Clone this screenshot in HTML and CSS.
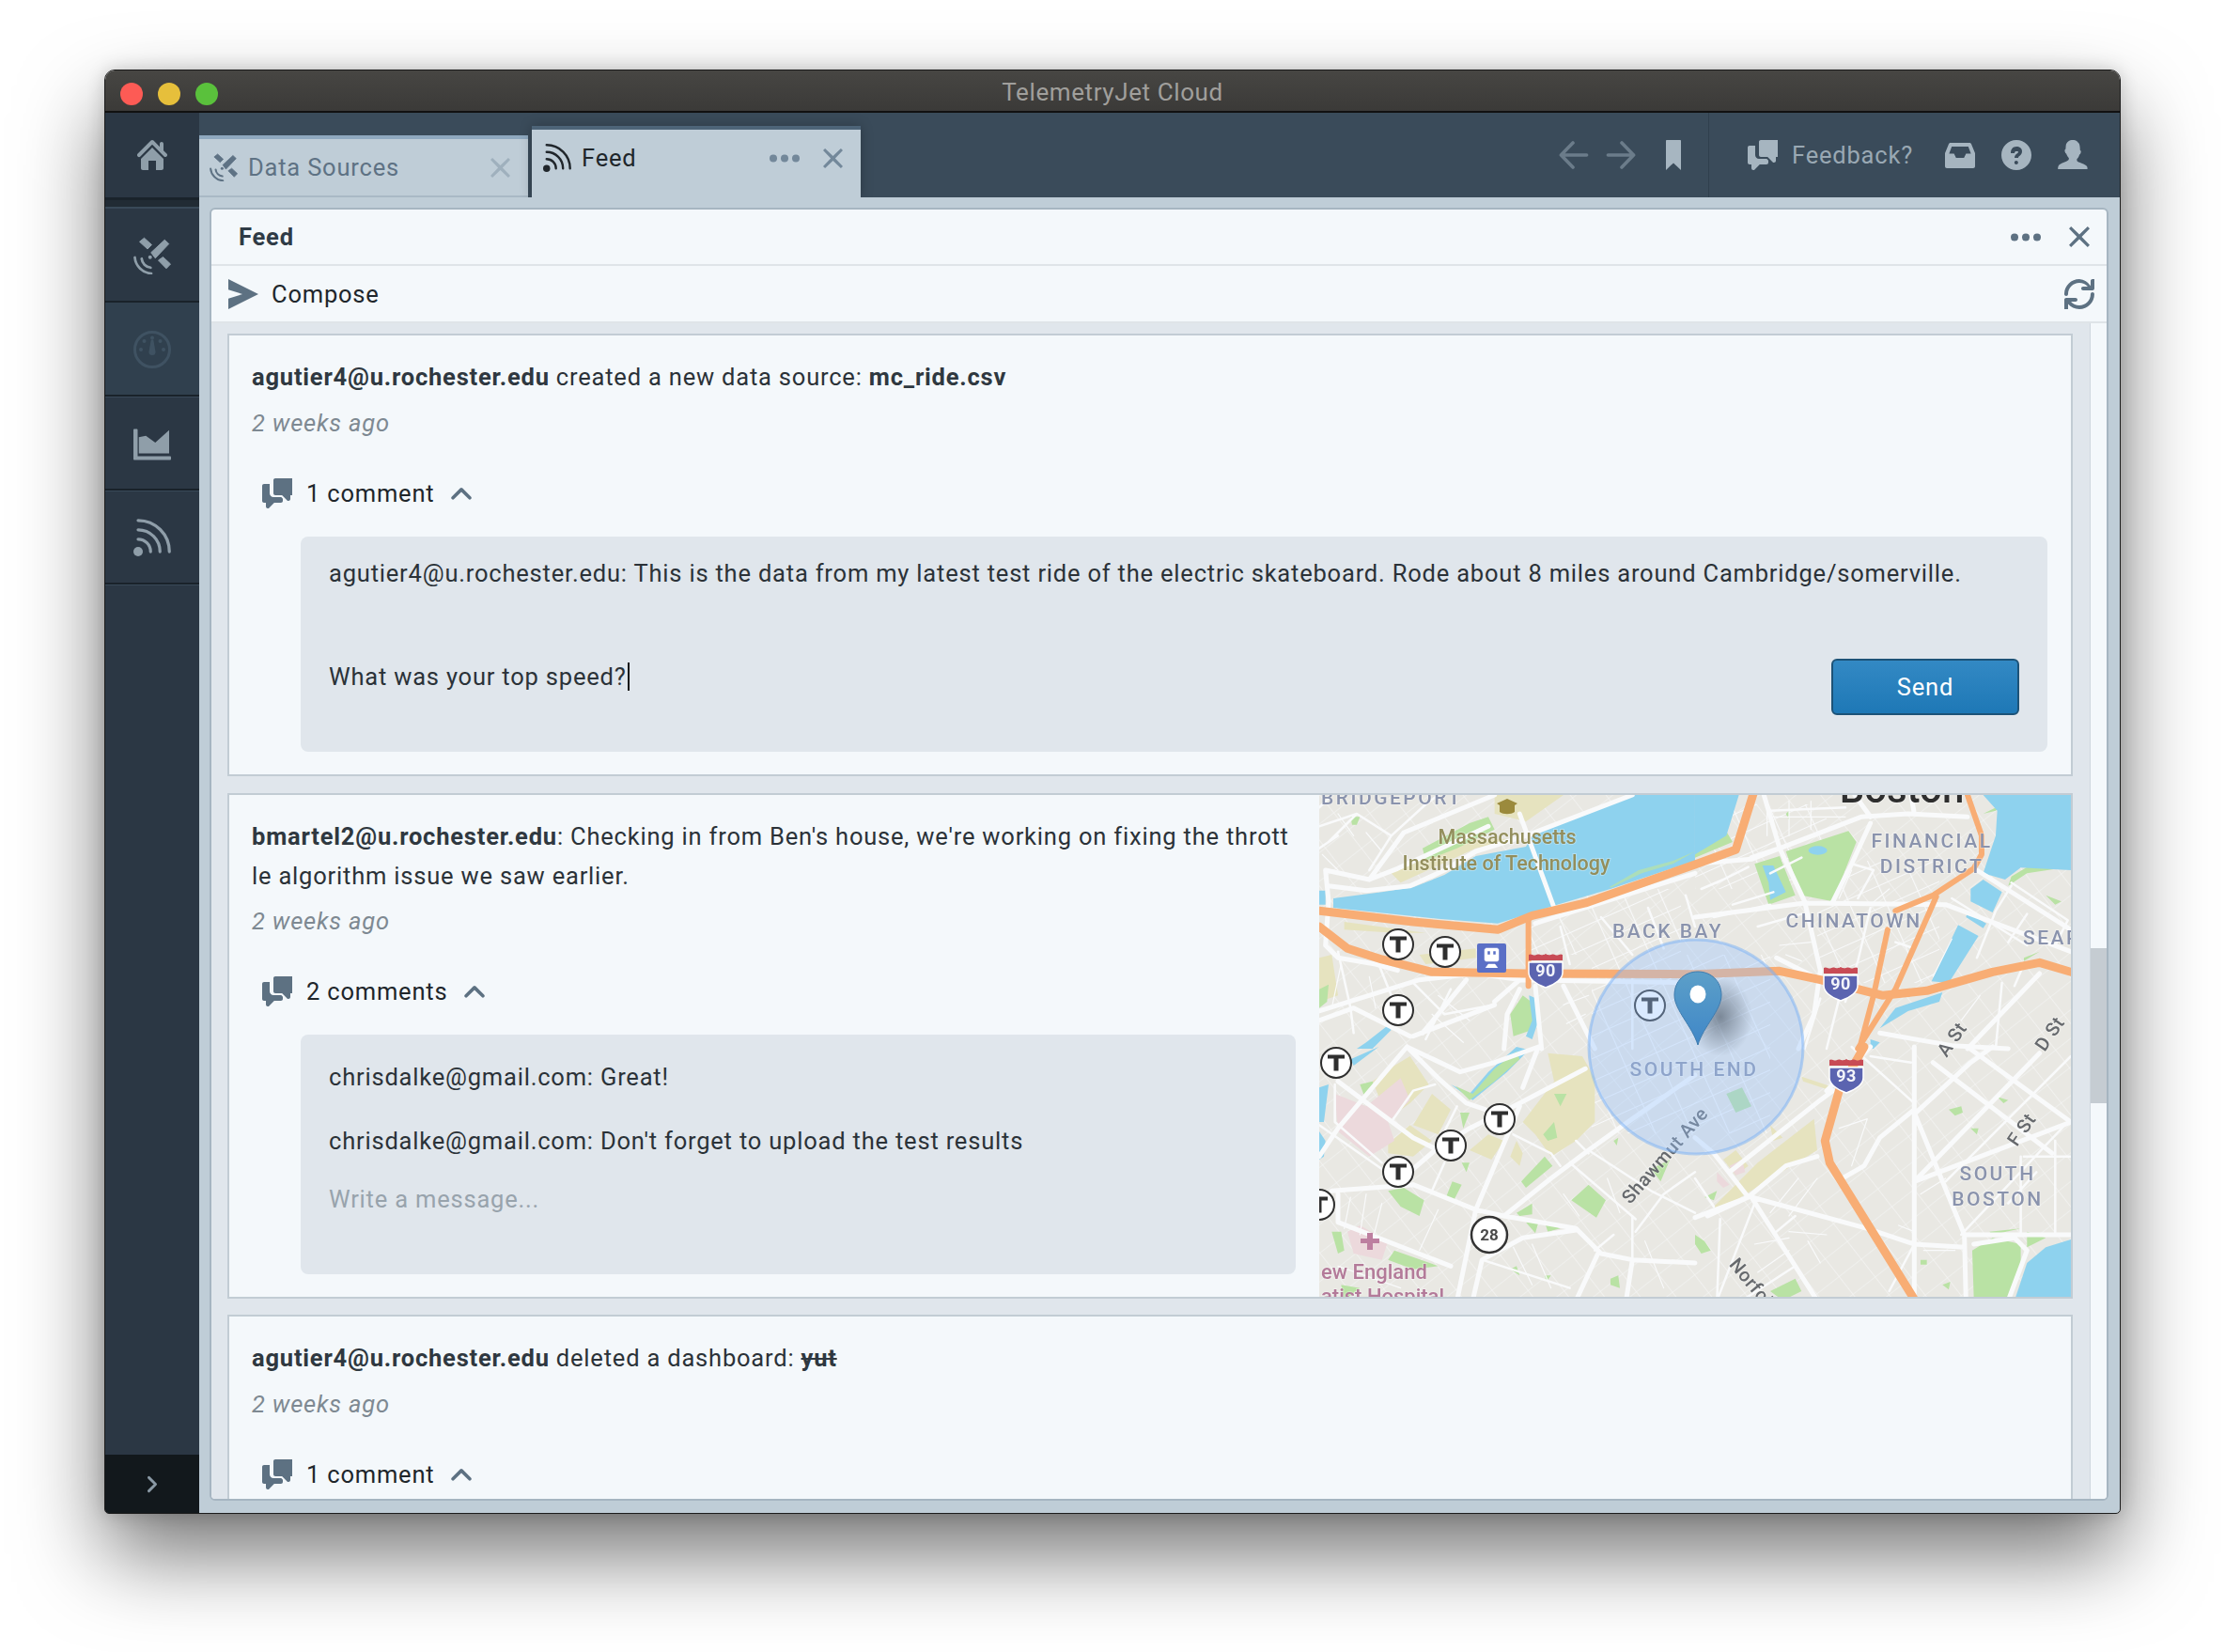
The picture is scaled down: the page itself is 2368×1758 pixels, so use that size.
FILE: index.html
```html
<!DOCTYPE html>
<html lang="en">
<head>
  <meta charset="UTF-8">
  <title>TelemetryJet Cloud</title>
  <link rel="stylesheet" href="styles.css">
</head>
<body>
  <svg class="sprites" width="0" height="0">
    <defs>
      <symbol id="i-home" viewBox="0 0 16 16"><path d="M2 10v5c0 .55.45 1 1 1h3v-5h4v5h3c.55 0 1-.45 1-1v-5L8 4l-6 6zm13.71-2.71L14 5.59V2c0-.55-.45-1-1-1s-1 .45-1 1v1.59L8.71.29C8.53.11 8.28 0 8 0s-.53.11-.71.29l-7 7a1.003 1.003 0 001.42 1.42L8 2.41l6.29 6.29c.18.19.43.3.71.3a1.003 1.003 0 00.71-1.71z"/></symbol>
      <symbol id="i-satellite" viewBox="0 0 16 16"><path stroke="currentColor" stroke-width=".4" stroke-linejoin="round" d="M2.600 2.100L4.600.5 7.800 3.400 6 5.200zM7.500 6.700L13.300 1.300 15.100 3 9.300 9.100zM10.600 10L12.600 8.600 15.800 11.600 14 13.500z"/><circle cx="7.100" cy="8.700" r=".8"/><path d="M3.500 9.300c.2 2 1.800 3.600 3.800 3.800M.6 8.800c.3 3.600 3.300 6.600 7 6.800" fill="none" stroke="currentColor" stroke-width="1.100" stroke-linecap="round"/></symbol>
      <symbol id="i-gauge" viewBox="0 0 16 16"><circle cx="8" cy="8" r="7.400" fill="none" stroke="currentColor" stroke-width="1.200"/><path d="M7.500 3.800h1l.9 5.200a1.400 1.400 0 11-2.800 0z"/><circle cx="8" cy="3" r=".8"/><circle cx="4.600" cy="4.400" r=".8"/><circle cx="11.400" cy="4.400" r=".8"/><circle cx="3.200" cy="8" r=".8"/><circle cx="12.800" cy="8" r=".8"/></symbol>
      <symbol id="i-chart" viewBox="0 0 16 16"><path d="M2.300 5.300L5.300 4.700 9.300 7.600 15.200 2.300V12.200H2.300z"/><path d="M0 2.200c0-.2.200-.4.400-.4h1c.2 0 .4.200.4.400v11.200h13.800c.2 0 .4.200.4.400v.8c0 .2-.2.400-.4.400H.4c-.2 0-.4-.2-.4-.4z"/></symbol>
      <symbol id="i-feed" viewBox="0 0 16 16"><circle cx="2" cy="14" r="2"/><path d="M2 8.700a5.300 5.300 0 015.300 5.300M2 4.700A9.300 9.300 0 0111.300 14M2 .7A13.300 13.300 0 0115.300 14" fill="none" stroke="currentColor" stroke-width="1.300" stroke-linecap="round"/></symbol>
      <symbol id="i-chat" viewBox="0 0 16 16"><path d="M6 10c-1.100 0-2-.9-2-2V3H1c-.55 0-1 .45-1 1v8c0 .55.45 1 1 1h1v2a1.003 1.003 0 001.71.71L6.410 13H10c.55 0 1-.45 1-1v-1.170l-.83-.83H6zm9-10H7c-.55 0-1 .45-1 1v7c0 .55.45 1 1 1h3.590l2.710 2.710c.17.18.42.29.7.29.55 0 1-.45 1-1V9h1c.55 0 1-.45 1-1V1c0-.55-.45-1-1-1z"/></symbol>
      <symbol id="i-cross" viewBox="0 0 16 16"><path d="M1.600 0L8 6.100 14.400 0 16 1.600 9.800 8l6.200 6.400-1.600 1.600L8 9.900 1.600 16 0 14.400 6.200 8 0 1.600z"/></symbol>
      <symbol id="i-more" viewBox="0 0 16 4"><circle cx="2" cy="2" r="2"/><circle cx="8" cy="2" r="2"/><circle cx="14" cy="2" r="2"/></symbol>
      <symbol id="i-send" viewBox="0 0 16 16"><path d="M0 0l16 8-16 8v-5.600L7.500 8 0 5.600z"/></symbol>
      <symbol id="i-refresh" viewBox="0 0 16 16"><path d="M14.990 6.990c-.55 0-1 .45-1 1 0 3.310-2.690 6-6 6-1.770 0-3.360-.78-4.460-2h2.460c.55 0 1-.45 1-1s-.45-1-1-1h-5c-.55 0-1 .45-1 1v5c0 .55.45 1 1 1s1-.45 1-1v-2.700c1.460 1.660 3.590 2.700 5.990 2.700 4.420 0 8-3.580 8-8 .01-.55-.44-1-.99-1zm0-7c-.55 0-1 .45-1 1v2.690A7.990 7.990 0 007.990 0c-4.420 0-8 3.580-8 8 0 .55.45 1 1 1s1-.45 1-1c0-3.310 2.690-6 6-6 1.770 0 3.360.78 4.460 2H9.990c-.55 0-1 .45-1 1s.45 1 1 1h5c.55 0 1-.45 1-1v-5c0-.55-.45-1-1-1z"/></symbol>
      <symbol id="i-chevron" viewBox="0 0 16 10"><path d="M1.500 8.500L8 2l6.500 6.500" fill="none" stroke="currentColor" stroke-width="2.600" stroke-linecap="round" stroke-linejoin="round"/></symbol>
      <symbol id="i-inbox" viewBox="0 0 16 16"><path fill-rule="evenodd" d="M3 1.500h10c.4 0 .8.2 1 .6L16 7v7c0 .6-.4 1-1 1H1c-.6 0-1-.4-1-1V7l2-4.900c.2-.4.6-.6 1-.6zm.6 2L2.200 7.200h2.600l1.100 2.300h4.200l1.100-2.300h2.600L12.400 3.500z"/></symbol>
      <symbol id="i-help" viewBox="0 0 16 16"><path d="M8 0C3.580 0 0 3.580 0 8s3.580 8 8 8 8-3.580 8-8-3.580-8-8-8zM7.920 13c-.55 0-1-.45-1-1s.45-1 1-1 1 .45 1 1-.45 1-1 1zm1.880-4.580c-.55.42-.8.65-.8 1.080H7c0-1.280.79-1.860 1.470-2.350.5-.37.53-.55.53-.73 0-.4-.45-.42-.95-.42-.56 0-1.050.23-1.050 1.020H5C5 4.860 6.040 3.500 8.050 3.500 9.620 3.500 11 4.300 11 5.980c0 1.220-.72 1.900-1.200 2.440z"/></symbol>
      <symbol id="i-person" viewBox="0 0 16 16"><path d="M15.680 14.320c-.46-1.050-2.680-1.750-4.160-2.400-1.480-.65-1.280-1.050-1.330-1.590-.01-.07-.01-.15-.01-.23.51-.45.92-1.070 1.190-1.780 0 0 .01-.04.02-.05.06-.15.11-.32.15-.48.34-.07.54-.44.61-.78.08-.14.23-.48.2-.87-.05-.5-.25-.73-.47-.82v-.09c0-.63-.06-1.550-.17-2.150A3.671 3.671 0 0010.320.72C9.680.25 8.770 0 7.960 0s-1.720.25-2.360.72c-.64.46-1.060 1.110-1.200 1.830-.12.6-.17 1.520-.17 2.150v.08c-.24.09-.45.32-.5.83-.03.38.13.72.2.86.08.35.28.72.63.78.04.17.09.33.15.49 0 .01.01.02.01.03l.01.01c.27.72.69 1.350 1.200 1.800 0 .07-.01.14-.01.21-.05.54.1.94-1.370 1.590-1.480.65-3.700 1.350-4.160 2.400-.46 1.040-.27 1.670-.27 1.670h15.640c.01 0 .2-.63-.26-1.670z"/></symbol>
      <symbol id="i-back" viewBox="0 0 16 16"><path d="M14.800 8H1.500M7.500 1.500L1.200 8l6.300 6.500" fill="none" stroke="currentColor" stroke-width="1.800" stroke-linecap="round" stroke-linejoin="round"/></symbol>
      <symbol id="i-forward" viewBox="0 0 16 16"><path d="M1.200 8h13.300M8.500 1.500L14.800 8l-6.300 6.500" fill="none" stroke="currentColor" stroke-width="1.800" stroke-linecap="round" stroke-linejoin="round"/></symbol>
      <symbol id="i-bookmark" viewBox="0 0 8 16"><path d="M.5 0h7c.3 0 .5.2.5.5V16l-4-3.800L0 16V.5C0 .2.2 0 .5 0z"/></symbol>
      <symbol id="i-t" viewBox="-18 -18 36 36"><circle r="16"/><path d="M-9-8.500H9V-4.500H2.500V8.500H-2.500V-4.500H-9z"/></symbol>
      <symbol id="i-shield" viewBox="-19 -19 38 40">
        <path class="shield-blue" d="M-18-8H18V3C18 11 8 16 0 19-8 16-18 11-18 3z"/>
        <path class="shield-red" d="M-18-10V-16C-15-18-13-14-10-16-7-18-4-14 0-17 4-14 7-18 10-16 13-14 15-18 18-16V-10z"/>
      </symbol>
    </defs>
  </svg>

  <div class="window">
    <div class="titlebar">
      <div class="lights">
        <span class="light light-red"></span>
        <span class="light light-yellow"></span>
        <span class="light light-green"></span>
      </div>
      <div class="app-title">TelemetryJet Cloud</div>
    </div>

    <div class="app">
      <nav class="sidebar">
        <div class="nav-home"><svg class="icon"><use href="#i-home"/></svg></div>
        <div class="nav-strip"></div>
        <div class="nav-item"><svg class="nav-icon"><use href="#i-satellite"/></svg></div>
        <div class="nav-item nav-item-off"><svg class="nav-icon"><use href="#i-gauge"/></svg></div>
        <div class="nav-item"><svg class="nav-icon"><use href="#i-chart"/></svg></div>
        <div class="nav-item"><svg class="nav-icon"><use href="#i-feed"/></svg></div>
        <div class="nav-toggle">
          <svg class="toggle-chevron" viewBox="0 0 10 16"><path d="M2 2l6 6-6 6" fill="none" stroke="currentColor" stroke-width="2.400" stroke-linecap="round" stroke-linejoin="round"/></svg>
        </div>
      </nav>

      <main class="main">
        <header class="toolbar">
          <div class="tabs">
            <div class="tab tab-idle">
              <svg class="icon tab-icon"><use href="#i-satellite"/></svg>
              <span class="tab-name">Data Sources</span>
              <svg class="tab-close"><use href="#i-cross"/></svg>
            </div>
            <div class="tab tab-active">
              <svg class="icon tab-icon"><use href="#i-feed"/></svg>
              <span class="tab-name">Feed</span>
              <svg class="tab-more"><use href="#i-more"/></svg>
              <svg class="tab-close"><use href="#i-cross"/></svg>
            </div>
          </div>
          <div class="history">
            <svg class="icon icon-dim"><use href="#i-back"/></svg>
            <svg class="icon icon-dim"><use href="#i-forward"/></svg>
            <svg class="bookmark"><use href="#i-bookmark"/></svg>
          </div>
          <div class="actions">
            <svg class="icon"><use href="#i-chat"/></svg>
            <span class="feedback">Feedback?</span>
            <svg class="icon"><use href="#i-inbox"/></svg>
            <svg class="icon"><use href="#i-help"/></svg>
            <svg class="icon"><use href="#i-person"/></svg>
          </div>
        </header>

        <section class="content">
          <div class="panel">
            <div class="panel-head">
              <h2 class="panel-title">Feed</h2>
              <svg class="panel-more"><use href="#i-more"/></svg>
              <svg class="panel-close"><use href="#i-cross"/></svg>
            </div>
            <div class="panel-tools">
              <svg class="icon send-icon"><use href="#i-send"/></svg>
              <span class="compose">Compose</span>
              <svg class="icon refresh-icon"><use href="#i-refresh"/></svg>
            </div>
            <div class="panel-body">
              <div class="feed">

                <article class="card">
                  <div class="card-text">
                    <p class="line"><strong>agutier4@u.rochester.edu</strong> created a new data source: <strong>mc_ride.csv</strong></p>
                    <p class="when">2 weeks ago</p>
                    <div class="toggle">
                      <svg class="icon"><use href="#i-chat"/></svg>
                      <span>1 comment</span>
                      <svg class="chevron"><use href="#i-chevron"/></svg>
                    </div>
                    <div class="thread thread-open">
                      <p class="msg">agutier4@u.rochester.edu: This is the data from my latest test ride of the electric skateboard. Rode about 8 miles around Cambridge/somerville.</p>
                      <div class="reply">
                        <span class="typed">What was your top speed?<i class="caret"></i></span>
                        <button class="send" type="button">Send</button>
                      </div>
                    </div>
                  </div>
                </article>

                <article class="card card-map">
                  <div class="card-text">
                    <p class="line"><strong>bmartel2@u.rochester.edu</strong>: Checking in from Ben's house, we're working on fixing the thrott<br>le algorithm issue we saw earlier.</p>
                    <p class="when when-tight">2 weeks ago</p>
                    <div class="toggle">
                      <svg class="icon"><use href="#i-chat"/></svg>
                      <span>2 comments</span>
                      <svg class="chevron"><use href="#i-chevron"/></svg>
                    </div>
                    <div class="thread">
                      <p class="msg">chrisdalke@gmail.com: Great!</p>
                      <p class="msg">chrisdalke@gmail.com: Don't forget to upload the test results</p>
                      <p class="placeholder">Write a message...</p>
                    </div>
                  </div>

                  <svg class="map" viewBox="0 0 800 536" preserveAspectRatio="xMinYMin slice">
                    <defs>
                      <pattern id="streets" width="30" height="24" patternUnits="userSpaceOnUse" patternTransform="rotate(-38)">
                        <path d="M0 0h30M0 0v24" stroke="#f6f7f7" stroke-width="1.200" fill="none"/>
                      </pattern>
                      <pattern id="blocks" width="36" height="22" patternUnits="userSpaceOnUse" patternTransform="rotate(-24)">
                        <path d="M0 0h36M0 0v22" stroke="#f8f9fa" stroke-width="2.200" fill="none"/>
                      </pattern>
                      <linearGradient id="pinFill" x1="0" y1="0" x2="0" y2="1">
                        <stop offset="0" stop-color="#5c9fc8"/>
                        <stop offset="1" stop-color="#3f87c8"/>
                      </linearGradient>
                      <radialGradient id="pinShadow">
                        <stop offset="0" stop-color="#46525f" stop-opacity=".6"/>
                        <stop offset="1" stop-color="#46525f" stop-opacity="0"/>
                      </radialGradient>
                    </defs>

                    <rect class="land" width="800" height="536"/>
                    <rect fill="url(#streets)" width="800" height="536"/>
                    <rect fill="url(#blocks)" x="225" y="100" width="160" height="70"/>
                    <rect fill="url(#blocks)" x="400" y="10" width="140" height="90"/>
                    <rect fill="url(#blocks)" x="290" y="170" width="190" height="190"/>
                    <rect fill="url(#blocks)" x="530" y="70" width="130" height="130"/>

                    <!-- each quadrant below is traced in 3x crop pixels -->
                    <g class="traced" transform="scale(.3333)">
                      <path class="tan" d="M560 0H780L660 85 600 70 560 60zM230 250L340 190 500 140 620 140 500 170 260 280zM80 405L340 440 240 440 80 430zM320 510L500 490 500 520 340 540zM0 520L40 510 60 640 0 660z"/>
                      <path class="park" d="M330 170L480 90 540 70 560 110 440 170 340 210zM610 700L650 640 690 670 680 750 620 770zM0 620L30 605 25 660 0 680zM100 70L130 70 120 95 105 95z"/>
                      <path class="water" d="M690 115L1000 0H1200V210L930 300 760 350 570 410 380 395 45 360 45 330 200 310 300 295 400 255 500 195 660 165zM670 640L695 650 700 720 680 780 660 770 680 720zM0 305L20 305 20 350 0 350zM150 790L220 735 230 750 170 810H120z"/>
                      <path class="park" d="M925 295L1020 240 1130 210 1200 180 1130 220 1030 250 935 295z" opacity=".7"/>
                      <path class="r1" d="M20 240L30 340 20 480 60 520 180 540 250 560M30 290L150 305 290 290 400 240 500 180 660 130 1000 0M640 60L750 360M690 410L1200 250M20 240L160 270 250 235 540 100M160 270L270 120 560 0M0 690L320 590 500 570M500 570L640 590 1200 600M560 660L640 590M690 610L710 810M640 620L600 700 590 810M0 720L110 680 290 770M300 770L560 670M780 610L880 810M330 760L470 590"/>
                      <path class="r2" d="M0 100L120 60 230 130 160 240M120 60L30 150M230 130L340 30 380 0M0 170L60 130M60 500L100 680 110 760M190 540L230 640M300 600L400 700M400 700L560 670M420 620L340 780M0 40L40 0M770 420L800 540M900 390L1000 510M1050 360L1100 490M1170 320L1200 420M850 580L960 560M1000 580L1000 810"/>
                      <path class="r3" d="M60 60L110 130M150 120L200 180M10 190L60 240M70 540L40 680M160 580L180 680M380 640L480 720M360 700L460 790M780 670L860 640M790 730L850 700"/>
                    </g>

                    <g class="traced" transform="translate(400 0) scale(.3333)">
                      <path class="park" d="M290 180L490 115 515 150 440 340 340 320zM190 220L270 195 320 320 235 350zM920 60L1000 20 960 50zM1010 260L1060 230 1160 235 1060 250 1000 290zM0 185L60 130 90 100 120 150 0 200zM290 60L300 50 300 80zM1120 320L1170 340 1150 350zM1050 530L1100 500 1050 520z"/>
                      <path class="water" d="M215 225L250 225 290 310 240 335 235 280zM920 0H1200V240L1040 232 990 270 920 250 960 130 965 50zM880 300L920 270 980 310 950 375 880 340zM870 375L930 410 920 425 865 390zM840 415L905 450 810 600 755 595zM590 745L640 680 790 630 780 660 680 690zM560 780L590 790 570 810H560zM0 0H140L100 130 0 190z"/>
                      <ellipse class="water" cx="392" cy="177" rx="30" ry="14"/>
                      <path class="r1" d="M0 220L180 205 530 70 680 60 870 70M180 200L270 170 350 340 400 560 380 700 330 810M270 170L220 0M350 345L800 350 1200 500M440 340L500 220 560 90M900 240L1200 430M560 70L510 0M700 60L690 0M590 760L820 800 1000 810M1100 570L870 810M0 390L350 345M260 520L400 590"/>
                      <path class="r2" d="M1010 290L960 370 900 520M1010 280L1190 400 1150 480M500 220L570 240 520 330M560 360L520 530 480 660M640 390L600 470M640 470L700 490M820 330L1060 480M980 600L960 810M1020 610L1050 540M240 250L340 200M120 350L250 310M60 390L240 350M200 420L340 380M240 50L480 40M70 280L170 230M20 300L90 270M400 650L350 810M460 650L420 810M1060 380L1000 470"/>
                      <path class="r3" d="M230 20V130M300 20V130M370 20V110M240 70H480M500 240L460 330M620 300L560 350M270 480L370 470M290 510L340 530M820 460L760 580M910 640L850 720"/>
                    </g>

                    <g class="traced" transform="translate(0 268) scale(.3333)">
                      <path class="tan" d="M240 60L290 30 350 120 290 180 220 230 170 110zM300 250L360 150 420 200 380 280zM220 310L290 250 360 300 300 350 220 340zM480 330L540 280 590 300 550 360zM610 350L630 300 650 340 640 380zM650 240L750 110 730 20 840 30 880 100 880 240 820 300 740 350 690 280z"/>
                      <path class="pink" d="M50 150L150 190 260 100 290 170 220 240 240 300 160 350 60 270zM90 590L130 570 220 620 200 680 110 660z"/>
                      <path class="water" d="M100 40L190 0 110 60zM0 270L20 300 15 350 0 360zM0 130L30 120 15 240 0 240z"/>
                      <path class="park" d="M220 460L270 450 335 490 320 540 260 510zM405 480L425 430 455 440 430 490zM645 430L720 350 745 380 660 450zM805 490L860 440 915 490 885 545zM715 280L750 240 760 290 730 300zM630 530L680 500 680 535 640 540zM660 560L700 560 690 595zM720 560L770 580 730 590zM240 650L380 700 300 710 220 680zM40 590L70 590 80 650 60 660zM130 120L170 110 180 130 145 160zM1060 390L1120 360 1090 430zM455 370L480 370 470 400zM450 210L480 210 460 260zM750 150L790 150 770 190zM940 300L955 290 950 315zM70 760L130 770 80 810zM610 710L630 700 640 730zM720 730L740 730 725 750zM930 740L955 730 960 770 930 760z"/>
                      <path class="water" d="M420 120L480 150 540 80 630 0 670 10 600 80 490 170z"/>
                      <path class="park" d="M435 125L490 150 560 70 630 15 640 40 560 110 480 170z"/>
                      <path class="r1" d="M300 390L370 330 480 260 640 180 850 70M590 540L740 420 860 330 1000 230 1200 90M280 0L60 260 0 350M60 110L300 290 420 350M280 0L380 100 470 180 530 200M500 520L640 190M500 520L440 810M300 440L500 520 590 540 820 580 900 660 1000 680 1200 690M40 460L300 440M60 470L60 560 420 700M490 810L520 680 650 610 820 585M1000 680L980 810M890 660L820 810M700 0L650 130M280 0L450 80 560 50 700 0"/>
                      <path class="r2" d="M370 120L300 140 230 240M370 330L440 190M400 370L360 460M620 280L740 340 770 380M800 370L1010 550M860 330L1060 460 1200 530M820 300L860 340M520 680L800 770M1000 540L1000 680M1010 590L1100 470 1200 400M50 120L50 240 200 370M0 250L200 390M940 600L880 650"/>
                      <path class="r3" d="M100 480L80 580M150 470L130 600M200 500L170 620M380 520L320 650M60 700L260 770M620 640L680 760M680 630L740 770M780 470L830 540M920 420L960 530M1040 620L1100 770"/>
                    </g>

                    <g class="traced" transform="translate(400 268) scale(.3333)">
                      <path class="tan" d="M60 510L200 370 380 230 390 330 130 490 70 530zM340 95L430 125 420 135 345 110zM90 360L130 330 170 380 130 410zM240 250L280 290 250 300z"/>
                      <path class="pink" d="M70 400L110 440 90 450 70 430zM110 380L150 360 160 400 130 410z"/>
                      <path class="park" d="M885 650L950 610 1040 630 1040 700 1000 800 890 800zM0 600L30 620 50 650 20 660 0 630zM240 780L320 740 340 780 280 810zM810 200L850 190 855 210 830 220zM880 260L905 260 900 280zM965 160L1000 170 985 180zM30 480L70 460 60 490zM720 680L740 680 740 695 720 695zM790 760L815 750 810 775zM100 150L150 130 180 190 130 210zM1060 590L1120 610 1060 640zM940 590L1040 580 950 600z"/>
                      <path class="water" d="M1020 810L1060 690 1120 640 1200 615V810z"/>
                      <path class="r1" d="M700 0V810M700 210L860 600 865 810M700 200L590 290 540 380 470 420M170 480L290 380 390 350M180 480L550 580 700 630 860 640M180 480L390 810M860 600L1200 600M890 630L1020 610 1060 650 1000 810M700 215L880 50 950 0M0 545L170 480 60 340 0 290M170 480L40 540M110 400L400 170 440 140M420 140L560 0M760 50L1140 340M870 0L1200 240M1200 240L700 430M700 430L1100 20"/>
                      <path class="r2" d="M800 430L1200 30M850 600L1190 240M1150 300V600M1040 600V350M1200 350H1050M700 630L620 780M320 540L260 590M190 500L70 810M320 700L150 810M0 420L60 510M80 550L70 810M560 30L690 50M700 180L500 0M1000 500L1090 400"/>
                      <path class="r3" d="M460 260L550 230 500 380M330 420L240 530M390 420L300 540M300 590L420 600M360 620L400 690M720 470L800 420M650 570L700 590M730 650L830 650M190 630L300 610M200 720L300 650"/>
                    </g>

                    <g class="traced" transform="translate(400 0) scale(.3333)">
                      <path class="hw" d="M870 0L915 130 915 190 890 235 760 320 640 370M770 325L640 620 520 810M615 430L570 640 525 810"/>
                    </g>
                    <g class="traced" transform="scale(.3333)">
                      <path class="hw hw-wide" d="M0 370L300 405 570 430 680 385 850 345 1200 222 1330 175 1385 0"/>
                      <path class="hw hw-wide" d="M0 420L90 490 200 525 360 565 660 570 1200 572 1470 562 1600 590 1720 620 1800 640 1940 625 2150 565 2300 535 2400 565"/>
                      <path class="hw" d="M668 400L668 610"/>
                      <path class="hw hw-wide" d="M1740 804L1660 944 1615 1104 1630 1174 1900 1610"/>
                    </g>

                    <text class="lbl lbl-area lbl-start" x="2" y="10">BRIDGEPORT</text>
                    <text class="lbl lbl-city" x="620" y="8">Boston</text>
                    <text class="lbl lbl-poi" x="200" y="52">Massachusetts</text>
                    <text class="lbl lbl-poi" x="199" y="80">Institute of Technology</text>
                    <text class="lbl lbl-area" x="652" y="56">FINANCIAL</text>
                    <text class="lbl lbl-area" x="652" y="83">DISTRICT</text>
                    <text class="lbl lbl-area" x="569" y="141">CHINATOWN</text>
                    <text class="lbl lbl-area" x="371" y="152">BACK BAY</text>
                    <text class="lbl lbl-area lbl-start" x="749" y="159">SEAPORT</text>
                    <text class="lbl lbl-area" x="722" y="410">SOUTH</text>
                    <text class="lbl lbl-area" x="722" y="437">BOSTON</text>
                    <text class="lbl lbl-area" x="399" y="299">SOUTH END</text>
                    <text class="lbl lbl-street" transform="translate(373 388) rotate(-49)">Shawmut Ave</text>
                    <text class="lbl lbl-street" transform="translate(679 264) rotate(-55)">A St</text>
                    <text class="lbl lbl-street" transform="translate(783 258) rotate(-55)">D St</text>
                    <text class="lbl lbl-street" transform="translate(753 360) rotate(-55)">F St</text>
                    <text class="lbl lbl-street" transform="translate(458 527) rotate(50)">Norfolk</text>
                    <text class="lbl lbl-hosp lbl-start" x="2" y="515">ew England</text>
                    <text class="lbl lbl-hosp lbl-start" x="2" y="541">atist Hospital</text>
                    <path class="hosp-cross" d="M51 466h6v6h7v5h-7v7h-6v-7h-7v-5h7z"/>
                    <path class="school" d="M200 4l11 5-3 2v7c-4 3-12 3-16 0v-7l-3-2z"/>

                    <g class="t-stops">
                      <use href="#i-t" x="66" y="141" width="36" height="36"/>
                      <use href="#i-t" x="116" y="149" width="36" height="36"/>
                      <use href="#i-t" x="66" y="211" width="36" height="36"/>
                      <use href="#i-t" x="0" y="267" width="36" height="36"/>
                      <use href="#i-t" x="334" y="206" width="36" height="36"/>
                      <use href="#i-t" x="174" y="327" width="36" height="36"/>
                      <use href="#i-t" x="122" y="355" width="36" height="36"/>
                      <use href="#i-t" x="66" y="383" width="36" height="36"/>
                      <use href="#i-t" x="-18" y="418" width="36" height="36"/>
                    </g>

                    <rect class="rail" x="168" y="158" width="31" height="31" rx="2"/>
                    <path class="rail-mark" d="M178 163h11c1 0 2 1 2 2v10c0 1-1 2-2 2h-11c-1 0-2-1-2-2v-10c0-1 1-2 2-2zm1 3v4h3v-4zm6 0v4h3v-4zM177 184l3-4h7l3 4"/>

                    <use class="shield" href="#i-shield" x="222" y="167" width="38" height="40"/>
                    <text class="shield-num" x="241" y="193">90</text>
                    <use class="shield" href="#i-shield" x="536" y="181" width="38" height="40"/>
                    <text class="shield-num" x="555" y="207">90</text>
                    <use class="shield" href="#i-shield" x="542" y="279" width="38" height="40"/>
                    <text class="shield-num" x="561" y="305">93</text>

                    <circle class="route" cx="181" cy="468" r="19"/>
                    <text class="route-num" x="181" y="474">28</text>

                    <circle class="radius" cx="401" cy="268" r="114"/>
                    <ellipse fill="url(#pinShadow)" cx="427" cy="236" rx="34" ry="42"/>
                    <path fill="url(#pinFill)" stroke="#3f7cae" d="M403 188c14 0 25 10 25 25 0 16-19 33-25 53-6-20-25-37-25-53 0-15 11-25 25-25z"/>
                    <ellipse cx="403" cy="212" rx="8.500" ry="9.500" fill="#fff"/>
                  </svg>
                </article>

                <article class="card card-last">
                  <div class="card-text">
                    <p class="line"><strong>agutier4@u.rochester.edu</strong> deleted a dashboard: <strong class="gone">yut</strong></p>
                    <p class="when">2 weeks ago</p>
                    <div class="toggle">
                      <svg class="icon"><use href="#i-chat"/></svg>
                      <span>1 comment</span>
                      <svg class="chevron"><use href="#i-chevron"/></svg>
                    </div>
                  </div>
                </article>

              </div>
              <div class="scrolltrack"><div class="scrollthumb"></div></div>
            </div>
          </div>
        </section>
      </main>
    </div>
  </div>
</body>
</html>
```

FILE: styles.css
```css
* {
  box-sizing: border-box;
}

html, body {
  height: 100%;
}

body {
  margin: 0;
  padding: 75px 112px 148px 112px;
  overflow: hidden;
  background-color: #fff;
  font-family: Roboto, "Noto Sans", sans-serif;
  font-size: 25.5px;
  letter-spacing: 0.8px;
  color: #2b3238;
}

.sprites {
  display: block;
  height: 0;
}

.icon {
  display: block;
  width: 32px;
  height: 32px;
  fill: currentColor;
  flex: none;
}

/* window */

.window {
  display: flex;
  flex-direction: column;
  height: 1535px;
  border-radius: 10px 10px 4px 4px;
  overflow: hidden;
  outline: 1px solid #1b1b1b;
  box-shadow: 0 44px 90px rgba(0, 0, 0, 0.55), 0 0 20px rgba(0, 0, 0, 0.2);
}

.titlebar {
  display: flex;
  align-items: center;
  justify-content: center;
  position: relative;
  height: 45px;
  padding-top: 3px;
  flex: none;
  background: linear-gradient(#474643, #3b3a38);
  border-bottom: 2px solid #111;
}

.lights {
  position: absolute;
  left: 16px;
  top: 13px;
  display: flex;
  gap: 16px;
}

.light {
  width: 24px;
  height: 24px;
  border-radius: 50%;
}

.light-red { background-color: #fd5b55; }
.light-yellow { background-color: #e6bf3b; }
.light-green { background-color: #5ac13c; }

.app-title {
  font-size: 26px;
  letter-spacing: 0.6px;
  color: #a09f9c;
}

.app {
  display: flex;
  flex: 1;
  min-height: 0;
}

/* sidebar */

.sidebar {
  display: flex;
  flex-direction: column;
  width: 100px;
  flex: none;
  background-color: #2b3744;
  color: #8f9ea9;
}

.nav-home,
.nav-item {
  display: flex;
  align-items: center;
  justify-content: center;
}

.nav-home {
  height: 90px;
}

.nav-strip {
  height: 12px;
  background-color: #212b34;
  border-top: 3px solid #1a232b;
  border-bottom: 2px solid #394958;
}

.nav-item {
  height: 100px;
  padding-top: 2px;
  border-bottom: 2px solid #19222a;
  box-shadow: 0 1px 0 #394958;
}

.nav-icon {
  width: 40px;
  height: 40px;
  fill: currentColor;
}

.nav-item-off {
  background-color: #30404e;
  color: #3f5262;
}

.nav-toggle {
  display: flex;
  align-items: center;
  justify-content: center;
  height: 62px;
  margin-top: auto;
  background-color: #12181c;
  color: #8a99a5;
}

.toggle-chevron {
  width: 12px;
  height: 19px;
}

/* toolbar and tabs */

.main {
  display: flex;
  flex-direction: column;
  flex: 1;
  min-width: 0;
}

.toolbar {
  display: flex;
  height: 90px;
  flex: none;
  background-color: #3a4b5a;
  color: #a6b5c0;
}

.tabs {
  display: flex;
  align-items: flex-end;
  gap: 4px;
}

.tab {
  display: flex;
  align-items: center;
  width: 350px;
  background-color: #bfcdd7;
}

.tab-idle {
  height: 66px;
  padding: 0 19px 0 11px;
  border-top: 4px solid #8fa9bf;
  border-bottom: 2px solid #a9b9c5;
  color: #5e7284;
}

.tab-active {
  height: 76px;
  padding: 0 19px 12px 12px;
  border-top: 4px solid #4d6478;
  color: #20262b;
  box-shadow: 0 0 12px rgba(0, 0, 0, 0.25);
}

.tab-icon {
  width: 30px;
  height: 30px;
}

.tab-name {
  margin-left: 11px;
  margin-right: auto;
}

.tab-close {
  width: 21px;
  height: 21px;
  fill: #9fb0bd;
}

.tab-active .tab-close {
  fill: #73889a;
}

.tab-more {
  width: 32px;
  height: 9px;
  margin-right: 25px;
  fill: #73889a;
}

.history {
  display: flex;
  align-items: center;
  gap: 18px;
  margin-left: auto;
  padding-right: 29px;
  border-right: 1px solid #30404d;
}

.icon-dim {
  color: #6b7c8a;
}

.bookmark {
  width: 16px;
  height: 32px;
  margin-left: 14px;
  fill: #a7b6c1;
}

.actions {
  display: flex;
  align-items: center;
  gap: 28px;
  padding: 0 34px 0 41px;
}

.feedback {
  margin-left: -13px;
  margin-right: 6px;
  color: #99a8b3;
}

/* panel */

.content {
  flex: 1;
  min-height: 0;
  padding: 11px 12px 13px 11px;
  background-color: #bfcdd7;
}

.panel {
  display: flex;
  flex-direction: column;
  height: 100%;
  border: 2px solid #a6b5c1;
  border-radius: 6px;
  background-color: #f4f8fb;
  overflow: hidden;
}

.panel-head,
.panel-tools {
  display: flex;
  align-items: center;
  flex: none;
  border-bottom: 2px solid #dfe4e8;
}

.panel-head {
  height: 60px;
  padding: 0 18px 0 29px;
}

.panel-title {
  margin: 0 auto 0 0;
  font-size: 25.5px;
  font-weight: 700;
  color: #2f3b46;
}

.panel-more {
  width: 32px;
  height: 9px;
  margin-right: 30px;
  fill: #5d7182;
}

.panel-close {
  width: 22px;
  height: 22px;
  fill: #5d7182;
}

.panel-tools {
  height: 61px;
  padding: 0 13px 0 18px;
  color: #5d7182;
}

.compose {
  margin-left: 14px;
  margin-right: auto;
  color: #20262b;
}

.panel-body {
  display: flex;
  flex: 1;
  min-height: 0;
  background-color: #e0e6ec;
}

.feed {
  flex: 1;
  min-width: 0;
  padding: 11px 18px 0 17px;
  overflow: hidden;
}

.scrolltrack {
  position: relative;
  width: 18px;
  flex: none;
  background-color: #f4f8fb;
  border-left: 1px solid #cfd7de;
}

.scrollthumb {
  position: absolute;
  left: 0;
  right: 0;
  top: 665px;
  height: 165px;
  background-color: #c5ccd2;
}

/* feed cards */

.card {
  display: flex;
  margin-bottom: 18px;
  border: 2px solid #c2ccd4;
  background-color: #f4f8fb;
}

.card-map {
  margin-bottom: 17px;
}

.card-last {
  min-height: 420px;
}

.card-text {
  flex: 1;
  min-width: 0;
  padding: 23px 25px 24px 24px;
}

.line,
.when,
.msg,
.placeholder {
  margin: 0;
  line-height: 42px;
}

.line strong {
  font-weight: 700;
  color: #2f3840;
}

.when {
  margin-top: 7px;
  font-style: italic;
  color: #7e8992;
}

.when-tight {
  margin-top: 6px;
}

.toggle {
  display: flex;
  align-items: center;
  height: 42px;
  margin-top: 33px;
  margin-left: 11px;
  color: #5d7182;
}

.toggle span {
  margin-left: 15px;
  color: #20262b;
}

.chevron {
  width: 22px;
  height: 14px;
  margin-left: 18px;
  fill: currentColor;
}

.thread {
  margin-top: 25px;
  margin-left: 52px;
  padding: 24px 30px 59px;
  border-radius: 8px;
  background-color: #e0e6ec;
}

.thread-open {
  padding-top: 18px;
  padding-bottom: 39px;
}

.msg {
  margin-bottom: 26px;
}

.reply {
  display: flex;
  align-items: flex-start;
  justify-content: space-between;
  height: 62px;
  margin-top: 68px;
}

.typed {
  line-height: 42px;
}

.caret {
  display: inline-block;
  width: 2px;
  height: 30px;
  margin-left: 1px;
  vertical-align: -6px;
  background-color: #111;
}

.send {
  width: 200px;
  height: 60px;
  margin-top: 2px;
  border: 2px solid #1d5378;
  border-radius: 6px;
  background: linear-gradient(#3389c4, #1e78b6);
  font: inherit;
  letter-spacing: inherit;
  color: #fff;
}

.placeholder {
  margin-top: -6px;
  color: #98a3ac;
}

.gone {
  text-decoration: line-through;
}

/* map */

.map {
  display: block;
  width: 800px;
  height: 534px;
  flex: none;
  font-family: Roboto, sans-serif;
  letter-spacing: 0;
  filter: blur(0.5px);
}

.land { fill: #e9e8e3; }
.tan { fill: #e6e3bf; }
.pink { fill: #ecd9dc; }
.park { fill: #b9e2a4; }
.water { fill: #8ed2ee; }

.traced path {
  vector-effect: non-scaling-stroke;
  stroke-linejoin: round;
  stroke-linecap: round;
}

.r1,
.r2,
.r3,
.hw {
  fill: none;
  stroke: #f9fafb;
}

.r1 { stroke-width: 5px; }
.r2 { stroke-width: 2.5px; }
.r3 { stroke-width: 1.2px; }

.hw {
  stroke: #f8ad74;
  stroke-width: 6px;
}

.hw-wide {
  stroke-width: 9px;
}

.lbl {
  text-anchor: middle;
  font-weight: 500;
  stroke: rgba(255, 255, 255, 0.3);
  stroke-width: 2px;
  paint-order: stroke;
}

.lbl-start {
  text-anchor: start;
}

.lbl-area {
  font-size: 21px;
  letter-spacing: 2.5px;
  fill: #8a93ad;
}

.lbl-city {
  font-size: 42px;
  fill: #2e2e2e;
}

.lbl-poi {
  font-size: 21.5px;
  fill: #938e5c;
}

.lbl-street {
  font-size: 20px;
  letter-spacing: 0.5px;
  fill: #66696d;
}

.lbl-hosp {
  font-size: 22px;
  fill: #b37a99;
}

.hosp-cross { fill: #bd7fa0; }
.school { fill: #9b8a3c; }

.t-stops {
  fill: #fff;
  stroke: #2f2f2f;
  stroke-width: 2px;
}

#i-t path {
  fill: #2f2f2f;
  stroke: none;
}

.rail { fill: #5a6fc6; }
.rail-mark { fill: #fff; fill-rule: evenodd; stroke: #fff; stroke-width: 0.5px; }

.shield-blue { fill: #5b64b0; stroke: #fff; stroke-width: 1.500px; }
.shield-red { fill: #c84b55; }

.shield-num {
  text-anchor: middle;
  font-size: 18px;
  font-weight: 700;
  letter-spacing: 0.5px;
  fill: #f3f5fa;
}

.route {
  fill: #fff;
  stroke: #333;
  stroke-width: 2.500px;
}

.route-num {
  text-anchor: middle;
  font-size: 17px;
  font-weight: 700;
  fill: #4a4a4a;
}

.radius {
  fill: rgba(150, 195, 255, 0.36);
  stroke: rgba(120, 175, 245, 0.5);
  stroke-width: 3px;
}
```
